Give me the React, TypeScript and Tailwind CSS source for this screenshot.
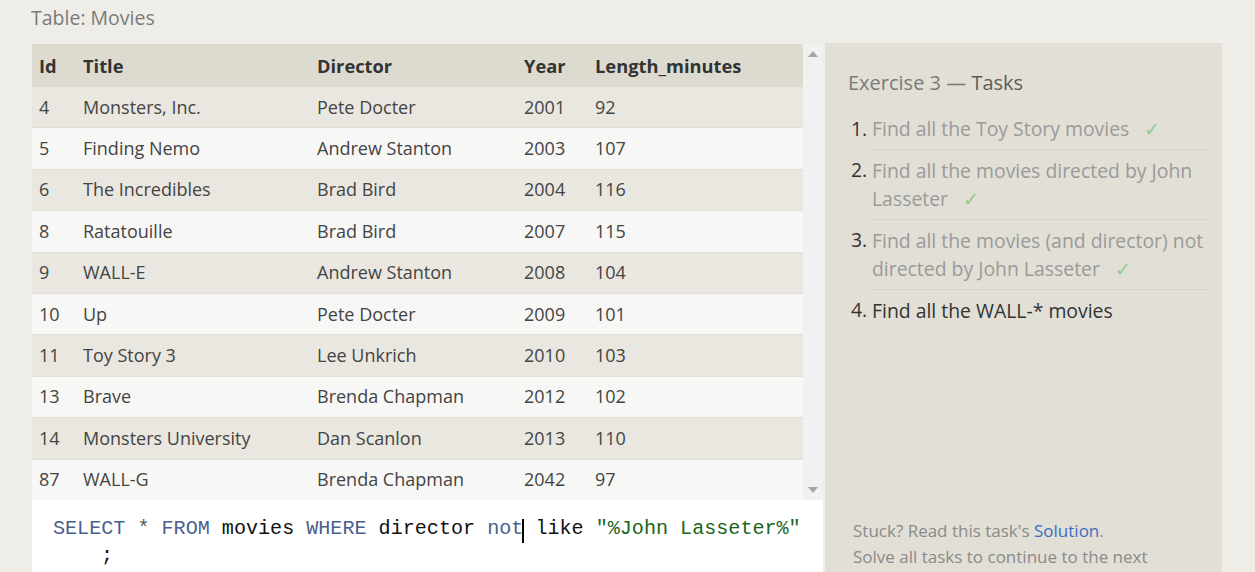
import React from "react";

const movies = [
  { id: 4, title: "Monsters, Inc.", director: "Pete Docter", year: 2001, length: 92 },
  { id: 5, title: "Finding Nemo", director: "Andrew Stanton", year: 2003, length: 107 },
  { id: 6, title: "The Incredibles", director: "Brad Bird", year: 2004, length: 116 },
  { id: 8, title: "Ratatouille", director: "Brad Bird", year: 2007, length: 115 },
  { id: 9, title: "WALL-E", director: "Andrew Stanton", year: 2008, length: 104 },
  { id: 10, title: "Up", director: "Pete Docter", year: 2009, length: 101 },
  { id: 11, title: "Toy Story 3", director: "Lee Unkrich", year: 2010, length: 103 },
  { id: 13, title: "Brave", director: "Brenda Chapman", year: 2012, length: 102 },
  { id: 14, title: "Monsters University", director: "Dan Scanlon", year: 2013, length: 110 },
  { id: 87, title: "WALL-G", director: "Brenda Chapman", year: 2042, length: 97 },
];

const tasks = [
  { text: "Find all the Toy Story movies", done: true },
  { text: "Find all the movies directed by John Lasseter", done: true },
  { text: "Find all the movies (and director) not directed by John Lasseter", done: true },
  { text: "Find all the WALL-* movies", done: false },
];

const cols = "grid grid-cols-[44px_234px_207px_71px_1fr]";

function Scrollbar() {
  return (
    <div className="flex w-[20px] flex-col items-center justify-between bg-[#f1f1f1] py-[7px]">
      <svg width="10" height="6" viewBox="0 0 10 6"><path d="M0 6 L5 0 L10 6 Z" fill="#a5a5a5" /></svg>
      <svg width="10" height="6" viewBox="0 0 10 6"><path d="M0 0 L10 0 L5 6 Z" fill="#a5a5a5" /></svg>
    </div>
  );
}

export default function App() {
  return (
    <div className="h-[572px] overflow-hidden bg-[#efede7] pl-[31px] font-['Open_Sans',sans-serif]">
      <div className="pt-[6px] text-[19.5px] leading-[24px] text-[#7a7a7a]">Table: Movies</div>
      <div className="mt-[13px] flex items-start">
        <div className="mt-[1px] ml-[1px] w-[791px]">
          <div className="flex h-[456px]">
            <div className="w-[771px] overflow-hidden text-[18px] text-[#444]">
              <div className={`${cols} h-[43px] items-center bg-[#dddbd0] pt-[1px] text-[18.3px] font-bold text-[#333]`}>
                <div className="pl-[7px]">Id</div>
                <div className="pl-[7px]">Title</div>
                <div className="pl-[7px]">Director</div>
                <div className="pl-[7px]">Year</div>
                <div className="pl-[7px]">Length_minutes</div>
              </div>
              {movies.map((m, i) => (
                <div key={m.id} className={`${cols} h-[41.4px] items-center border-b border-[#e0ded6] ${i % 2 === 0 ? "bg-[#e9e7e0]" : "bg-[#f7f7f5]"}`}>
                  <div className="pl-[7px]">{m.id}</div>
                  <div className="pl-[7px]">{m.title}</div>
                  <div className="pl-[7px]">{m.director}</div>
                  <div className="pl-[7px]">{m.year}</div>
                  <div className="pl-[7px]">{m.length}</div>
                </div>
              ))}
            </div>
            <Scrollbar />
          </div>
          <div className="h-[72px] bg-white pt-[15px] pl-[21px] font-['Liberation_Mono',monospace] text-[20.1px] leading-[27px] text-[#111] whitespace-pre">
            <div>
              <span className="text-[#4b5f8c]">SELECT</span>
              <span className="text-[#555]"> * </span>
              <span className="text-[#4b5f8c]">FROM</span>
              <span> movies </span>
              <span className="text-[#4b5f8c]">WHERE</span>
              <span> director </span>
              <span className="text-[#4b5f8c]">not</span>
              <span className="relative"><span className="absolute top-[2px] left-0 h-[24px] w-[2px] -translate-x-[1px] bg-black" /></span>
              <span> like </span>
              <span className="text-[#18661c]">"%John Lasseter%"</span>
            </div>
            <div className="pl-[48px]">;</div>
          </div>
        </div>
        <div className="ml-[2px] flex h-[529px] w-[397px] flex-col bg-[#e2dfd6] pr-[11px] pl-[23px] pt-[26px]">
          <div className="text-[20px] leading-[28px] text-[#7a7a7a]">
            Exercise 3 — <span className="text-[#5c5c5c]">Tasks</span>
          </div>
          <ol className="mt-[11px] ml-[3px] text-[19.4px] leading-[28px]">
            {tasks.map((t, i) => (
              <li key={i} className="flex">
                <span className="w-[21px] shrink-0 pt-[7px] text-[#333]">{i + 1}.</span>
                <div className={`flex-1 pt-[7px] pb-[6px] ${i > 0 ? "border-t border-[#d7d4ca]" : ""} ${t.done ? "text-[#9a9a9a]" : "text-[#333]"}`}>
                  {t.text}
                  {t.done && <span className="ml-[15px] text-[#8fcb8f]">✓</span>}
                </div>
              </li>
            ))}
          </ol>
          <div className="mt-auto pb-[2px] pl-[5px] text-[17px] leading-[26px] text-[#8a8a8a]">
            <div>
              Stuck? Read this task's <span className="text-[#3d6cc4]">Solution</span>.
            </div>
            <div>Solve all tasks to continue to the next</div>
          </div>
        </div>
      </div>
    </div>
  );
}
